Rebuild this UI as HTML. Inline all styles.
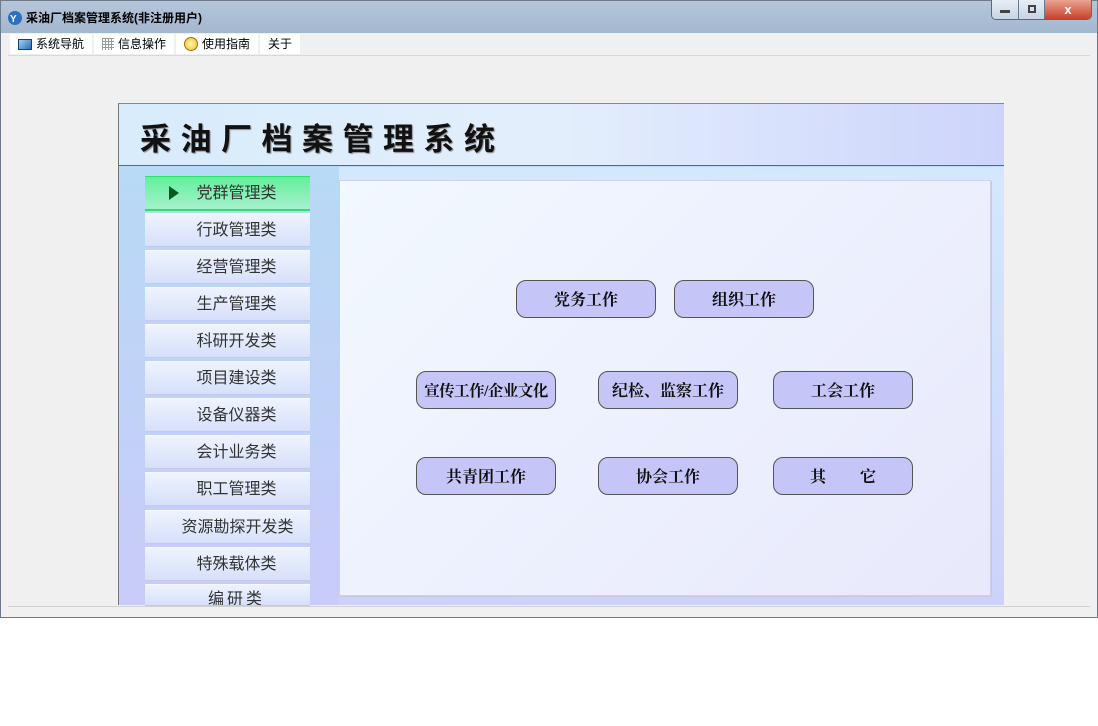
<!DOCTYPE html>
<html><head><meta charset="utf-8"><style>
*{margin:0;padding:0;box-sizing:border-box}
body{width:1098px;height:726px;background:#fff;position:relative;overflow:hidden;font-family:"Liberation Sans","Noto Sans CJK SC",sans-serif}
.abs{position:absolute}
.win{left:0;top:0;width:1098px;height:618px;border:1px solid #6c7a8a;background:#f0f0f0}
.title{left:1px;top:1px;width:1096px;height:32px;background:linear-gradient(#b5c6da,#a3b7cf)}
.tt{left:26px;top:9px;font-size:12px;font-weight:bold;color:#000}
.menu{left:10px;top:34px;height:20px;font-size:12px;display:flex;gap:2px}
.menu div{background:#fff;height:20px;line-height:20px;padding:0 8px 0 8px;display:flex;align-items:center;gap:4px}
.sb{left:145px;width:165px;height:33px;background:linear-gradient(#eef3fd,#d6e0fa);border-top:1px solid #f4f8ff;box-shadow:0 1px 0 #c2c8ee;font-size:16px;color:#333;text-align:center;line-height:34px;padding-left:18px}
.btn{width:140px;height:38px;border:1px solid #555;border-radius:10px;background:#c5c5f8;font-size:16px;font-weight:bold;font-family:"Liberation Serif","Noto Serif CJK SC",serif;text-align:center;line-height:39px;color:#111}
</style></head><body>
<div class="abs win"></div>
<div class="abs title"></div>
<svg class="abs" style="left:7px;top:10px" width="16" height="16"><circle cx="8" cy="8" r="7" fill="#2b6fc0"/><text x="3" y="12" font-size="10" fill="#fff" font-weight="bold">Y</text></svg>
<div class="abs tt">采油厂档案管理系统(非注册用户)</div>
<div class="abs" style="left:991px;top:0;width:101px;height:20px;border:1px solid #5a6a7c;border-top:none;border-radius:0 0 5px 5px;overflow:hidden;display:flex">
<div style="width:27px;background:linear-gradient(#e8eef6,#c7d4e4);border-right:1px solid #6a7a8c;position:relative"><div class="abs" style="left:8px;top:10px;width:10px;height:3px;background:#444"></div></div>
<div style="width:26px;background:linear-gradient(#e8eef6,#c7d4e4);border-right:1px solid #6a7a8c;position:relative"><div class="abs" style="left:9px;top:5px;width:8px;height:8px;border:2px solid #444"></div></div>
<div style="flex:1;background:linear-gradient(#e9a593,#c8402a);color:#fff;text-align:center;font-weight:bold;font-size:13px;line-height:19px">x</div></div>
<div class="abs menu">
<div><span style="display:inline-block;width:14px;height:11px;border:1px solid #1a3c66;background:linear-gradient(135deg,#9fd0f5,#2c6fb4)"></span>系统导航</div>
<div><span style="display:inline-block;width:12px;height:12px;background:repeating-linear-gradient(90deg,#999 0 1px,transparent 1px 3px),repeating-linear-gradient(#999 0 1px,#fff 1px 3px)"></span>信息操作</div>
<div><span style="display:inline-block;width:14px;height:14px;border-radius:50%;background:radial-gradient(#fff8b0,#f0c020);border:1px solid #a07010"></span>使用指南</div>
<div>关于</div>
</div>
<div class="abs" style="left:8px;top:55px;width:1082px;height:1px;background:#d8d8d8"></div>
<div class="abs" style="left:8px;top:606px;width:1082px;height:1px;background:#d0d0d0"></div>
<div class="abs" style="left:118px;top:103px;width:886px;height:502px;border-left:1px solid #777;border-top:1px solid #888;background:linear-gradient(#b5dcf6,#c9cbf8)"></div>
<div class="abs" style="left:119px;top:104px;width:885px;height:62px;background:linear-gradient(90deg,#d8ecfb,#e3eefc 50%,#cdd4fb);border-bottom:1px solid #666"></div>
<div class="abs" style="left:140px;top:114px;font-size:31px;font-weight:bold;letter-spacing:9.5px;color:#111;text-shadow:1px 1px 1px #888">采油厂档案管理系统</div>
<div class="abs" style="left:339px;top:167px;width:665px;height:438px;background:linear-gradient(#d4e8fb,#cdd2fb)"></div>
<div class="abs" style="left:339px;top:180px;width:652px;height:416px;background:linear-gradient(135deg,#f2f8ff,#e8e9fc);border:1px solid #d0d0e8;box-shadow:1px 1px 0 #c8c8e0"></div>
<div class="abs sb" style="top:176px;background:linear-gradient(#63f09c,#a6f0cc);border-top:1px solid #2ee070;box-shadow:0 2px 0 #2ee070">党群管理类</div>
<svg class="abs" style="left:169px;top:186px" width="10" height="14"><path d="M0 0L10 7L0 14Z" fill="#0a5a20"/></svg>
<div class="abs sb" style="top:213px">行政管理类</div>
<div class="abs sb" style="top:250px">经营管理类</div>
<div class="abs sb" style="top:287px">生产管理类</div>
<div class="abs sb" style="top:324px">科研开发类</div>
<div class="abs sb" style="top:361px">项目建设类</div>
<div class="abs sb" style="top:398px">设备仪器类</div>
<div class="abs sb" style="top:435px">会计业务类</div>
<div class="abs sb" style="top:472px">职工管理类</div>
<div class="abs sb" style="top:510px;padding-left:20px">资源勘探开发类</div>
<div class="abs sb" style="top:547px">特殊载体类</div>
<div class="abs sb" style="top:584px;height:21px;overflow:hidden;letter-spacing:3px;line-height:30px">编研类</div>
<div class="abs btn" style="left:516px;top:280px">党务工作</div>
<div class="abs btn" style="left:674px;top:280px">组织工作</div>
<div class="abs btn" style="left:416px;top:371px;font-size:15.5px;letter-spacing:-0.5px">宣传工作/企业文化</div>
<div class="abs btn" style="left:598px;top:371px">纪检、监察工作</div>
<div class="abs btn" style="left:773px;top:371px">工会工作</div>
<div class="abs btn" style="left:416px;top:457px">共青团工作</div>
<div class="abs btn" style="left:598px;top:457px">协会工作</div>
<div class="abs btn" style="left:773px;top:457px;word-spacing:30px">其 它</div>
</body></html>
